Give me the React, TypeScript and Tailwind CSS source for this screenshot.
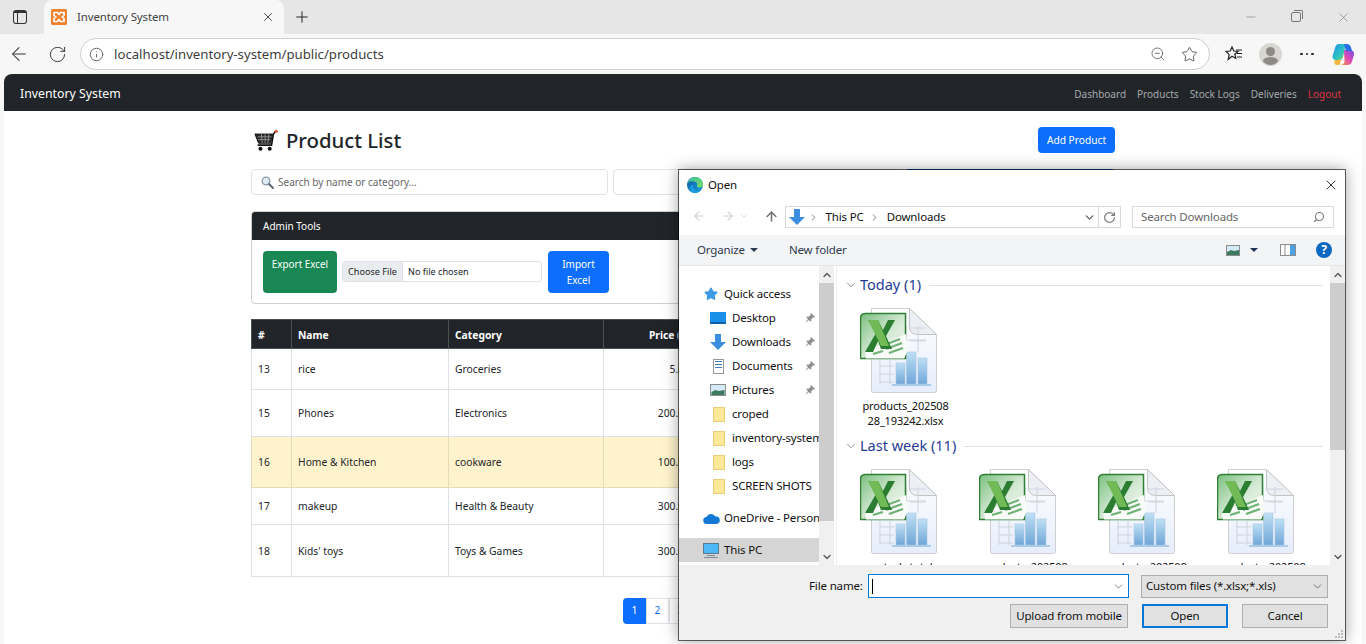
import { ArrowLeft, ArrowRight, ArrowUp, ChevronDown, ChevronRight, ChevronUp, Info, Minus, Plus, RotateCw, Search, Star, X, ZoomOut } from "lucide-react";

const pageFont = "font-['Noto_Sans','Open_Sans',sans-serif]";

const rows = [
  { id: 13, name: "rice", category: "Groceries", price: "5.00", stock: 40, h: "h-[41px]", warn: false },
  { id: 15, name: "Phones", category: "Electronics", price: "200.00", stock: 12, h: "h-[47px]", warn: false },
  { id: 16, name: "Home & Kitchen", category: "cookware", price: "100.00", stock: 3, h: "h-[51px]", warn: true },
  { id: 17, name: "makeup", category: "Health & Beauty", price: "300.00", stock: 25, h: "h-[37px]", warn: false },
  { id: 18, name: "Kids' toys", category: "Toys & Games", price: "300.00", stock: 18, h: "h-[52px]", warn: false },
];

const XamppLogo = () => (
  <svg width="16" height="16" viewBox="0 0 16 16">
    <rect width="16" height="16" rx="1.5" fill="#f0802c" />
    <path d="M3 3.500h3.500l1.500 2 1.500-2H13v3l-1.800 1.500L13 9.500v3H9.500L8 10.500l-1.500 2H3v-3l1.800-1.500L3 6.500z" fill="none" stroke="#fff" strokeWidth="1.600" />
  </svg>
);

const EdgeLogo = () => (
  <svg width="16" height="16" viewBox="0 0 16 16">
    <defs>
      <linearGradient id="edgeA" x1="0" y1="0" x2="1" y2="1">
        <stop offset="0" stopColor="#35c1a1" />
        <stop offset="1" stopColor="#7ddb5e" />
      </linearGradient>
      <linearGradient id="edgeB" x1="0" y1="0" x2="1" y2="1">
        <stop offset="0" stopColor="#0c59a4" />
        <stop offset="1" stopColor="#1b9de2" />
      </linearGradient>
    </defs>
    <circle cx="8" cy="8" r="8" fill="url(#edgeB)" />
    <path d="M1 6C2 2 5 0 8 0c4.500 0 8 3.200 8 7.500 0 2-1.500 3-3.500 3-1.500 0-2.800-.7-2.500-1.500.5-1 .5-3.500-2.500-4.500C5 3.800 2.500 4 1 6z" fill="url(#edgeA)" />
    <path d="M6 8c-.5 3 1.500 6 5 6 1 0 2-.3 2.500-.7-1 1.500-3 2.700-5.500 2.700-3 0-5-2-5-5 0-2 1.500-3.500 3-3z" fill="#1b9de2" />
  </svg>
);

const CopilotLogo = () => (
  <svg width="23" height="23" viewBox="0 0 23 23">
    <defs>
      <linearGradient id="copA" x1="0" y1="0" x2="1" y2="1">
        <stop offset="0" stopColor="#1e90f0" />
        <stop offset="0.6" stopColor="#2fc5c0" />
        <stop offset="1" stopColor="#8bd33e" />
      </linearGradient>
      <linearGradient id="copB" x1="1" y1="0" x2="0" y2="1">
        <stop offset="0" stopColor="#6d4de8" />
        <stop offset="0.5" stopColor="#e04bb3" />
        <stop offset="1" stopColor="#f9a13a" />
      </linearGradient>
    </defs>
    <path d="M7 1h7l-3 13c-.5 2-2 3-4 3H4C1.500 17 0 15 .7 12.500L3 5c.6-2.500 2-4 4-4z" fill="url(#copA)" />
    <path d="M12 7h6c2.500 0 4.500 2 4 4.500l-2 7c-.6 2.500-2.500 3.500-4.500 3.500H8c3 0 4-1.500 4.500-3.500z" fill="url(#copB)" />
    <path d="M12 1h3c2 0 3.500 1.500 4 3.500L20 8h-6z" fill="#2b6fe8" />
    <path d="M3 17h6l-1.500 5H5c-2 0-3.500-2-2-5z" fill="#f4b63c" />
  </svg>
);

const CartEmoji = () => (
  <svg width="24" height="23" viewBox="0 0 26 24">
    <path d="M1 5h19l-2 10H5z" fill="#2b2b2b" stroke="#111" strokeWidth="1" />
    <path d="M4 8h15M4.500 11h13M8 5l1 10M12 5v10M16 5l-1 10" stroke="#9a9a9a" strokeWidth="0.9" />
    <path d="M4 17h15l2-12 2.500-3" fill="none" stroke="#111" strokeWidth="1.700" />
    <circle cx="24" cy="2" r="1.700" fill="#e0533d" />
    <circle cx="7" cy="21" r="2.200" fill="#111" />
    <circle cx="17" cy="21" r="2.200" fill="#111" />
  </svg>
);

const SearchEmoji = () => (
  <svg width="13" height="13" viewBox="0 0 13 13">
    <circle cx="5" cy="5" r="3.800" fill="#dcebf6" stroke="#8a98a6" strokeWidth="1.300" />
    <path d="M8 8l4 4" stroke="#5e6a76" strokeWidth="2" strokeLinecap="round" />
  </svg>
);

const FavoritesIcon = () => (
  <svg width="18" height="18" viewBox="0 0 18 18" fill="none" stroke="#222" strokeWidth="1.200">
    <path d="M7 2l1.800 4 4.200.4-3.200 2.800 1 4.200L7 11.200 3.200 14.500l1-4.800L1 6.400 5.200 6z" />
    <path d="M11 5h6M12 8.500h5M12 12h5" />
  </svg>
);

const Avatar = () => (
  <svg width="23" height="23" viewBox="0 0 23 23">
    <circle cx="11.500" cy="11.500" r="11.500" fill="#d9d7d3" />
    <circle cx="11.500" cy="8.500" r="4.500" fill="#8d8a86" />
    <path d="M3.800 18c1.200-3 4-4 7.700-4s6.500 1 7.700 4c-2 2.800-4.700 4-7.700 4s-5.700-1.200-7.700-4z" fill="#8d8a86" />
  </svg>
);

const ExcelIcon = ({ id }: { id: string }) => (
  <svg width="78" height="86" viewBox="0 0 78 86" className="shrink-0">
    <defs>
      <linearGradient id={`paper${id}`} x1="0" y1="0" x2="0" y2="1">
        <stop offset="0" stopColor="#ffffff" />
        <stop offset="1" stopColor="#e6edfb" />
      </linearGradient>
      <linearGradient id={`bar${id}`} x1="0" y1="0" x2="0" y2="1">
        <stop offset="0" stopColor="#bfe0f5" />
        <stop offset="1" stopColor="#6fa6d8" />
      </linearGradient>
      <linearGradient id={`box${id}`} x1="0" y1="0" x2="1" y2="1">
        <stop offset="0" stopColor="#7cc080" />
        <stop offset="0.55" stopColor="#d6ead6" />
        <stop offset="1" stopColor="#f4faf4" />
      </linearGradient>
    </defs>
    <path d="M11.500.5h38l27 26v56q0 2-2 2h-61q-2 0-2-2z" fill={`url(#paper${id})`} stroke="#cfcfcf" />
    <path d="M49.500.5v18q0 8 8 8h19z" fill="#eceff3" stroke="#c4c4c4" />
    <path d="M50 20h16M50 33h16" stroke="#ced6e2" />
    <path d="M20 52v24M30 52v24M46 18v26M58 18v26M20 58h14M20 66h14M20 74h14M46 32h20" stroke="#cdd3dc" fill="none" />
    <rect x="36" y="55" width="9" height="21" fill={`url(#bar${id})`} stroke="#a7c6e2" strokeWidth="0.6" />
    <rect x="46.500" y="44" width="9.500" height="32" fill={`url(#bar${id})`} stroke="#a7c6e2" strokeWidth="0.6" />
    <rect x="58" y="50" width="9" height="26" fill={`url(#bar${id})`} stroke="#a7c6e2" strokeWidth="0.6" />
    <rect x="32" y="76" width="39" height="2" fill="#a9cbe8" />
    <path d="M5.500 5.500h40v45h-45v-40q0-5 5-5z" fill={`url(#box${id})`} stroke="#2f7f35" strokeWidth="1.500" />
    <path d="M5 43L46 26l2 16-4 8.500H6z" fill="#f8fbf7" />
    <path d="M24 37l16-6M26 41l16-6M29 45l14-5M13 46l10-3" stroke="#6db174" strokeWidth="2.200" />
    <path d="M8 12h10l5 10 5-10h7l-9 16 6 13H21l-3-8-5 11H5l11-19z" fill="#2a7d31" />
    <path d="M8 12h10l11 26h-8z" fill="#71ba55" />
  </svg>
);

const FileCell = ({ id, top, bottom }: { id: string; top: string; bottom?: string }) => (
  <div className="w-[119px] shrink-0 flex flex-col items-center">
    <div className="w-full flex pl-[2px]">
      <ExcelIcon id={id} />
    </div>
    <div className="mt-[4px] w-[96px] -ml-[24px] text-[11px] leading-[15px] text-center text-[#111] break-all">
      {top}
      {bottom && <br />}
      {bottom}
    </div>
  </div>
);

const NavFolder = ({ name }: { name: string }) => (
  <div className="flex items-center h-6 pl-[34px]">
    <div className="w-[12px] h-[15px] bg-[#fde89a] border border-[#e8cd72] shrink-0" />
    <span className="ml-[7px] whitespace-nowrap">{name}</span>
  </div>
);

const PinIcon = () => (
  <svg width="10" height="10" viewBox="0 0 10 10" className="ml-auto mr-[4px] shrink-0">
    <path d="M6 0l4 4-1 .6-.8-.2L6.200 6.300 6.400 8 5.700 8.700 1.300 4.300 2 3.600l1.700.2L5.600 1.800l-.2-.8zM3 6l-2.600 3.600L4 7z" fill="#8f8f8f" />
  </svg>
);

const NavRow = ({ name, icon }: { name: string; icon: React.ReactNode }) => (
  <div className="flex items-center h-6 pl-[31px]">
    <div className="w-[16px] flex justify-center shrink-0">{icon}</div>
    <span className="ml-[6px]">{name}</span>
    <PinIcon />
  </div>
);

const GroupHead = ({ label }: { label: string }) => (
  <div className="flex items-center h-5 pl-[7px] pr-[7px]">
    <ChevronDown size={14} strokeWidth={1.200} className="text-[#666] shrink-0" />
    <span className="ml-[2px] text-[14.500px] tracking-normal text-[#1f3c94] whitespace-nowrap">{label}</span>
    <div className="flex-1 ml-[8px] h-px bg-[#e2e2e2]" />
  </div>
);

const Scrollbar = ({ thumb, wide }: { thumb: string; wide: string }) => (
  <div className={`${wide} bg-[#f0f0f0] flex flex-col items-center shrink-0`}>
    <div className="h-[17px] flex items-center justify-center">
      <ChevronUp size={12} strokeWidth={2.500} className="text-[#555]" />
    </div>
    <div className={`${thumb} w-full bg-[#cdcdcd]`} />
    <div className="mt-auto h-[17px] flex items-center justify-center">
      <ChevronDown size={12} strokeWidth={2.500} className="text-[#555]" />
    </div>
  </div>
);

const OpenDialog = () => (
  <div className="absolute left-[678px] top-[169px] w-[668px] h-[472px] border border-black/60 bg-clip-padding bg-white shadow-[0_0_14px_rgba(0,0,0,0.35)] flex flex-col text-[11.500px] tracking-[-0.15px] text-[#111]">
    <div className="h-[30px] flex items-center pl-[8px] pr-[6px] shrink-0">
      <EdgeLogo />
      <span className="ml-[5px]">Open</span>
      <X size={16} strokeWidth={1.200} className="ml-auto text-black" />
    </div>

    <div className="h-[35px] flex pt-[6px] shrink-0">
      <div className="w-[106px] flex items-start pt-[3px] pl-[13px]">
        <ArrowLeft size={14} className="text-[#d0d0d0]" />
        <ArrowRight size={14} className="ml-[15px] text-[#d0d0d0]" />
        <ChevronDown size={10} className="ml-[4px] mt-[2px] text-[#d0d0d0]" />
        <ArrowUp size={15} strokeWidth={2.500} className="ml-[15px] text-[#777]" />
      </div>
      <div className="w-[336px] h-[22px] border border-[#d9d9d9] flex items-center">
        <svg width="16" height="18" viewBox="0 0 16 18" className="ml-[3px]">
          <path d="M5 1h6v8h5l-8 8-8-8h5z" fill="#3b8de0" />
        </svg>
        <ChevronRight size={11} strokeWidth={2} className="ml-[3px] text-[#777]" />
        <span className="ml-[6.500px]">This PC</span>
        <ChevronRight size={11} strokeWidth={2} className="ml-[5.500px] text-[#777]" />
        <span className="ml-[6.500px]">Downloads</span>
        <ChevronDown size={13} strokeWidth={2.500} className="ml-auto mr-[2px] text-[#666]" />
        <div className="h-full w-px bg-[#d9d9d9]" />
        <RotateCw size={13} strokeWidth={2.200} className="mx-[4px] text-[#777]" />
      </div>
      <div className="ml-[11px] w-[202px] h-[22px] border border-[#d9d9d9] flex items-center pl-[8px] pr-[8px] text-[#666]">
        Search Downloads
        <Search size={12} strokeWidth={2.200} className="ml-auto -scale-x-100 text-[#777]" />
      </div>
    </div>

    <div className="h-[31px] bg-[#f3f4f6] border-b border-[#e6e6e6] flex items-center pl-[18px] pr-[13px] text-[#2d3a50] shrink-0">
      <span>Organize</span>
      <span className="ml-[5px] w-0 h-0 border-x-[4px] border-x-transparent border-t-[4px] border-t-[#2d3a50]" />
      <span className="ml-[31px]">New folder</span>
      <svg width="14" height="11" viewBox="0 0 14 11" className="ml-auto">
        <rect x="0.500" y="0.500" width="13" height="10" fill="#d5e9f7" stroke="#8b8b8b" />
        <path d="M1 7l4-2 3 1 5-1v5H1z" fill="#3c7a60" />
      </svg>
      <span className="ml-[10px] w-0 h-0 border-x-[4px] border-x-transparent border-t-[4px] border-t-[#1e3157]" />
      <svg width="16" height="12" viewBox="0 0 16 12" className="ml-[22px]">
        <rect x="0.500" y="0.500" width="15" height="11" fill="#fff" stroke="#8b8b8b" />
        <rect x="10" y="1" width="5" height="10" fill="#4ca0e4" />
        <path d="M5 1v10" stroke="#8b8b8b" />
      </svg>
      <div className="ml-[20px] w-4 h-4 rounded-full bg-[#0a67c2] text-white text-[12px] font-bold flex items-center justify-center leading-none">?</div>
    </div>

    <div className="flex h-[299px] shrink-0">
      <div className="w-[140px] pt-[16px] overflow-hidden shrink-0 bg-white">
        <div className="flex items-center h-6 pl-[25px]">
          <Star size={14} className="text-[#3f9ae4] fill-[#3f9ae4] shrink-0" />
          <span className="ml-[6px] whitespace-nowrap">Quick access</span>
        </div>
        <NavRow name="Desktop" icon={<div className="w-[16px] h-[12px] bg-[#1a90e8] border-b-2 border-[#0b5ea8]" />} />
        <NavRow name="Downloads" icon={<svg width="16" height="18" viewBox="0 0 16 18"><path d="M5 1h6v8h5l-8 8-8-8h5z" fill="#3b8de0" /></svg>} />
        <NavRow name="Documents" icon={<div className="w-[11px] h-[15px] bg-white border border-[#999] flex flex-col gap-[2px] p-[1px]"><div className="h-px bg-[#3b7bbf]" /><div className="h-px bg-[#3b7bbf]" /><div className="h-px bg-[#3b7bbf]" /></div>} />
        <NavRow name="Pictures" icon={<svg width="16" height="12" viewBox="0 0 16 12"><rect x="0.500" y="0.500" width="15" height="11" fill="#d5e9f7" stroke="#8b8b8b" /><path d="M1.500 8l4-2 3 1 6-1v5h-13z" fill="#3c7a60" /></svg>} />
        <NavFolder name="croped" />
        <NavFolder name="inventory-system" />
        <NavFolder name="logs" />
        <NavFolder name="SCREEN SHOTS" />
        <div className="flex items-center h-6 pl-[24px] mt-[8px]">
          <svg width="17" height="11" viewBox="0 0 17 11" className="shrink-0">
            <path d="M4 11a3.500 3.500 0 0 1-.5-7A5 5 0 0 1 12.500 3.500 3.500 3.500 0 0 1 13.500 11z" fill="#1479d6" />
          </svg>
          <span className="ml-[4px] whitespace-nowrap">OneDrive - Personal</span>
        </div>
        <div className="flex items-center h-6 pl-[24px] mt-[8px] bg-[#d5d5d5]">
          <svg width="16" height="15" viewBox="0 0 16 15" className="shrink-0">
            <rect x="0.500" y="0.500" width="15" height="10" fill="#4cb8f5" stroke="#5a7a90" />
            <path d="M4 12.500h8M1 14.500h14" stroke="#7b8a96" />
          </svg>
          <span className="ml-[5px]">This PC</span>
        </div>
      </div>
      <Scrollbar wide="w-[15px]" thumb="h-[238px]" />
      <div className="w-[2px] bg-white" />
      <div className="w-px bg-[#efefef]" />
      <div className="flex-1 overflow-hidden pt-[9px]">
        <GroupHead label="Today (1)" />
        <div className="flex mt-[13px] pl-[21px]">
          <FileCell id="a" top="products_202508" bottom="28_193242.xlsx" />
        </div>
        <div className="mt-[8px]">
          <GroupHead label="Last week (11)" />
        </div>
        <div className="flex mt-[13px] pl-[21px]">
          <FileCell id="b" top="stock_total" />
          <FileCell id="c" top="products_202508" />
          <FileCell id="d" top="products_202508" />
          <FileCell id="e" top="products_202508" />
        </div>
      </div>
      <Scrollbar wide="w-[15px]" thumb="h-[167px]" />
    </div>

    <div className="flex-1 bg-[#f0f0f0] relative">
      <div className="flex items-center h-[24px] mt-[9px] pr-[17px]">
        <span className="ml-[130px] w-[59px]">File name:</span>
        <div className="w-[261px] h-[24px] bg-white border border-[#0078d7] flex items-center pl-[3px] pr-[3px]">
          <div className="w-px h-[15px] bg-black" />
          <ChevronDown size={13} strokeWidth={1.300} className="ml-auto text-[#555]" />
        </div>
        <div className="ml-[12px] w-[187px] h-[23px] bg-[#e1e1e1] border border-[#adadad] flex items-center pl-[4px] pr-[3px]">
          Custom files (*.xlsx;*.xls)
          <ChevronDown size={13} strokeWidth={1.300} className="ml-auto text-[#444]" />
        </div>
      </div>
      <div className="flex justify-end mt-[6px] pr-[17px]">
        <div className="w-[118px] h-[24px] bg-[#e1e1e1] border border-[#adadad] flex items-center justify-center whitespace-nowrap">Upload from mobile</div>
        <div className="ml-[14px] w-[86px] h-[24px] bg-[#e1e1e1] border-2 border-[#0078d7] flex items-center justify-center">Open</div>
        <div className="ml-[14px] w-[86px] h-[24px] bg-[#e1e1e1] border border-[#adadad] flex items-center justify-center">Cancel</div>
      </div>
      <svg width="10" height="10" viewBox="0 0 10 10" className="absolute right-[1px] bottom-[1px]">
        <path d="M7 1h2v2H7zM4 4h2v2H4zM7 4h2v2H7zM1 7h2v2H1zM4 7h2v2H4zM7 7h2v2H7z" fill="#bcbcbc" />
      </svg>
    </div>
  </div>
);

export default function App() {
  return (
    <div className={`relative w-[1366px] h-[644px] overflow-hidden bg-[#f7f7f7] ${pageFont}`}>
      <div className="h-[34px] bg-[#e6e6e6] flex items-end">
        <div className="w-[44px] h-[34px] flex items-center pl-[13px]">
          <div className="w-[14px] h-[14px] border-[1.500px] border-t-[3px] border-[#333] rounded-[3px] flex">
            <div className="w-[4px] h-full border-r-[1.500px] border-[#333]" />
          </div>
        </div>
        <div className="w-[240px] h-[34px] bg-[#f7f7f7] rounded-t-lg flex items-center pl-[7px] pr-[9px]">
          <XamppLogo />
          <span className="ml-[10px] pb-[1px] text-[11.500px] tracking-[-0.15px] text-[#444]">Inventory System</span>
          <X size={14} strokeWidth={1.500} className="ml-auto text-[#333]" />
        </div>
        <div className="h-[34px] flex items-center ml-[9px]">
          <Plus size={18} strokeWidth={1.300} className="text-[#222]" />
        </div>
        <div className="ml-auto h-[34px] flex items-center pr-[15px] text-[#777]">
          <Minus size={14} strokeWidth={1} />
          <div className="ml-[33px] relative w-[10px] h-[10px] border border-[#777] rounded-[2px]">
            <div className="absolute -top-[3px] -right-[3px] w-[9px] h-[9px] border-t border-r border-[#777] rounded-tr-[2px]" />
          </div>
          <X size={15} strokeWidth={1} className="ml-[35px]" />
        </div>
      </div>

      <div className="h-[40px] flex items-center text-[#333]">
        <div className="w-[38px] flex justify-center">
          <ArrowLeft size={22} strokeWidth={1.100} />
        </div>
        <div className="w-[38px] flex justify-center">
          <RotateCw size={19} strokeWidth={1.200} />
        </div>
        <div className="ml-[4px] w-[1130px] h-[32px] rounded-full border border-[#cfcfcf] bg-white flex items-center pl-[8px] pr-[11px]">
          <Info size={15} strokeWidth={1.400} className="text-[#555]" />
          <span className="ml-[10px] pt-[1px] text-[13.200px] text-[#3d3d3d]">localhost/inventory-system/public/products</span>
          <ZoomOut size={16} strokeWidth={1.200} className="ml-auto text-[#555]" />
          <Star size={17} strokeWidth={1.200} className="ml-[15px] text-[#444]" />
        </div>
        <div className="ml-[15px]">
          <FavoritesIcon />
        </div>
        <div className="ml-[16px]">
          <Avatar />
        </div>
        <div className="ml-[18px] flex gap-[3px]">
          <div className="w-[2.500px] h-[2.500px] rounded-full bg-[#222]" />
          <div className="w-[2.500px] h-[2.500px] rounded-full bg-[#222]" />
          <div className="w-[2.500px] h-[2.500px] rounded-full bg-[#222]" />
        </div>
        <div className="ml-[18px]">
          <CopilotLogo />
        </div>
      </div>

      <div className="mx-[4px] h-[570px] bg-white rounded-t-lg overflow-hidden">
        <nav className="h-[37px] bg-[#212529] flex items-center pl-[16px] pr-[21px] pt-[3px]">
          <span className="text-[12.300px] text-white">Inventory System</span>
          <div className="ml-auto flex gap-[11px] text-[10px] text-[#a5a8ab]">
            <span>Dashboard</span>
            <span>Products</span>
            <span>Stock Logs</span>
            <span>Deliveries</span>
            <span className="text-[#dc3545]">Logout</span>
          </div>
        </nav>

        <main className="w-[864px] mx-auto pt-[16px] text-[#212529]">
          <div className="flex items-center justify-between h-[26px]">
            <div className="flex items-center gap-[8px] ml-[3px] text-[20.300px] font-medium">
              <CartEmoji />
              <h2>Product List</h2>
            </div>
            <button className="w-[77px] h-[26px] pt-[1px] rounded-[4px] bg-[#0d6efd] text-white text-[10.200px]">Add Product</button>
          </div>

          <div className="grid grid-cols-[357px_287px_210px] gap-[5px] mt-[16px] h-[26px]">
            <div className="border border-[#dee2e6] rounded-[4px] flex items-center pl-[9px] gap-[4px] text-[10px] text-[#666]">
              <SearchEmoji />
              Search by name or category...
            </div>
            <div className="border border-[#dee2e6] rounded-[4px]" />
            <button className="rounded-[4px] bg-[#0d6efd]" />
          </div>

          <section className="mt-[16px] h-[93px] border border-[#ced0d2] rounded-[4px] overflow-hidden">
            <div className="h-[28px] pt-[1px] bg-[#212529] text-white text-[10px] flex items-center pl-[11px]">Admin Tools</div>
            <div className="flex p-[11px] h-[64px]">
              <button className="w-[74px] h-[42px] rounded-[4px] bg-[#198754] text-white text-[9.900px] leading-[16px] pt-[5px] self-start flex justify-center items-start">Export Excel</button>
              <div className="ml-[5px] mt-[10px] w-[200px] h-[21px] border border-[#dee2e6] rounded-[3px] flex items-center text-[9.100px] overflow-hidden">
                <span className="h-full w-[60px] shrink-0 bg-[#e9ecef] border-r border-[#dee2e6] flex items-center justify-center">Choose File</span>
                <span className="ml-[5px]">No file chosen</span>
              </div>
              <button className="ml-[6px] w-[61px] h-[42px] rounded-[4px] bg-[#0d6efd] text-white text-[10px] leading-[16px]">Import<br />Excel</button>
            </div>
          </section>

          <table className="mt-[15px] w-full table-fixed border-collapse text-[10.300px]">
            <colgroup>
              <col className="w-[40px]" />
              <col className="w-[157px]" />
              <col className="w-[155px]" />
              <col className="w-[93px]" />
              <col />
              <col />
            </colgroup>
            <thead>
              <tr className="h-[29px] bg-[#212529] text-white font-bold">
                <th className="border border-[#4d5154] px-[6px] pt-[4px] text-left">#</th>
                <th className="border border-[#4d5154] px-[6px] pt-[4px] text-left">Name</th>
                <th className="border border-[#4d5154] px-[6px] pt-[4px] text-left">Category</th>
                <th className="border border-[#4d5154] px-[6px] pt-[4px] text-right whitespace-nowrap">Price (₱)</th>
                <th className="border border-[#4d5154] px-[6px] pt-[4px] text-right">Stock</th>
                <th className="border border-[#4d5154] px-[6px] pt-[4px] text-left">Actions</th>
              </tr>
            </thead>
            <tbody>
              {rows.map((r) => {
                const cell = r.warn ? "border border-[#e6dbb9] bg-[#fff3cd] px-[6px] pt-[2px]" : "border border-[#dee2e6] px-[6px] pt-[2px]";
                return (
                  <tr key={r.id} className={r.h}>
                    <td className={cell}>{r.id}</td>
                    <td className={cell}>{r.name}</td>
                    <td className={cell}>{r.category}</td>
                    <td className={`${cell} text-right`}>{r.price}</td>
                    <td className={`${cell} text-right`}>{r.stock}</td>
                    <td className={cell} />
                  </tr>
                );
              })}
            </tbody>
          </table>

          <div className="mt-[21px] flex justify-center text-[10.300px] text-[#0d6efd]">
            <div className="w-[23px] h-[26px] bg-[#0d6efd] text-white rounded-l-[4px] flex items-center justify-center">1</div>
            {["2", "3", "4"].map((n) => (
              <div key={n} className="w-[23px] h-[26px] border border-[#dee2e6] flex items-center justify-center">{n}</div>
            ))}
            <div className="w-[28px] h-[26px] border border-[#dee2e6] rounded-r-[4px] flex items-center justify-center">»</div>
          </div>
        </main>
      </div>

      <OpenDialog />
    </div>
  );
}
